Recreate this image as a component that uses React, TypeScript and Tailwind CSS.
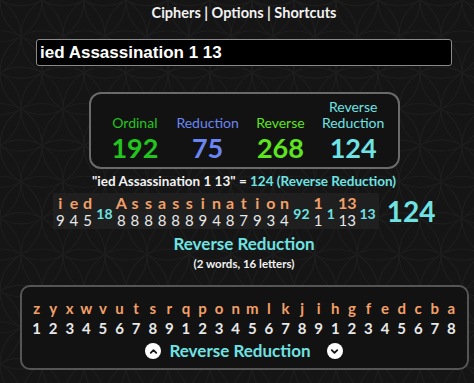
import { ChevronUp, ChevronDown } from 'lucide-react';

const words: { letters: string; values: number[]; sum: number }[] = [
    { letters: 'ied', values: [9, 4, 5], sum: 18 },
    { letters: 'Assassination', values: [8, 8, 8, 8, 8, 8, 9, 4, 8, 7, 9, 3, 4], sum: 92 },
];

const alphabet = 'zyxwvutsrqponmlkjihgfedcba'.split('');
const alphaValues = [1, 2, 3, 4, 5, 6, 7, 8, 9, 1, 2, 3, 4, 5, 6, 7, 8, 9, 1, 2, 3, 4, 5, 6, 7, 8];

const scores = [
    { label: 'Ordinal', value: 192, color: 'text-[#22c51e]' },
    { label: 'Reduction', value: 75, color: 'text-[#6b86f2]' },
    { label: 'Reverse', value: 268, color: 'text-[#5ee51f]' },
    { label: 'Reverse Reduction', value: 124, color: 'text-[#6fe3e3]' },
];

// faint flower-of-life lattice behind the page
function Pattern() {
    const r = 42;
    const h = (r * Math.sqrt(3)) / 2;
    const circles: { x: number; y: number }[] = [];
    for (let j = -1; j < 12; j++) {
        for (let i = -1; i < 14; i++) {
            circles.push({ x: i * r + (j % 2 ? r / 2 : 0), y: j * h });
        }
    }
    return (
        <svg className="absolute inset-0" width="474" height="383">
            {circles.map((c, k) => (
                <circle key={k} cx={c.x} cy={c.y} r={r} fill="none" stroke="#1e1e1e" strokeWidth="1.2" />
            ))}
        </svg>
    );
}

function Cell({ top, bottom, w }: { top: string; bottom: string | number; w?: string }) {
    return (
        <div className={`${w ?? ''} flex flex-col items-center`}>
            <span className="text-[16px] font-bold leading-[19px] text-[#f2a068]">{top}</span>
            <span className="text-[15px] leading-[17px] text-[#e8e8e8]">{bottom}</span>
        </div>
    );
}

function Sum({ n }: { n: number }) {
    return <span className="px-[2px] pt-[5px] text-[14px] font-bold leading-[17px] text-[#6fe3e3]">{n}</span>;
}

export default function App() {
    return (
        <div className="relative w-[474px] h-[383px] overflow-hidden bg-[#151515] text-white font-['Lato',sans-serif]">
            <Pattern />
            <div className="relative pl-[14px] flex flex-col items-center">
                {/* Nav */}
                <div className="pt-[4px] h-[24px] text-[14.5px] font-bold leading-[18px] text-[#f2f2f2]">
                    Ciphers | Options | Shortcuts
                </div>

                {/* Phrase input */}
                <input
                    type="text"
                    readOnly
                    value="ied Assassination 1 13"
                    className="mt-[15px] w-[416px] h-[27px] bg-black border border-[#8a8a8a] rounded-[3px] px-[3px] text-[17px] font-bold text-white font-['Liberation_Sans',Arial,sans-serif] outline-none"
                />

                {/* Score box */}
                <div className="mt-[26px] w-[311px] h-[77px] border-2 border-[#6a6a6a] rounded-[12px] bg-[#121212] px-[8px] grid grid-cols-4 items-end pb-[3px]">
                    {scores.map(s => (
                        <div key={s.label} className={`flex flex-col items-center ${s.color}`}>
                            <div className="text-[14px] leading-[16px] text-center">{s.label}</div>
                            <div className="text-[27px] font-bold leading-[33px]">{s.value}</div>
                        </div>
                    ))}
                </div>

                {/* Equation line */}
                <div className="mt-[4px] text-[13.5px] font-bold leading-[16px] text-[#f2f2f2]">
                    "ied Assassination 1 13" = <span className="text-[#6fe3e3]">124 (Reverse Reduction)</span>
                </div>

                {/* Breakdown */}
                <div className="mt-[4px] flex items-center">
                    <div className="flex items-center bg-[#1f1f1f] h-[36px] pl-[1px] pr-[1px]">
                        {words.map(w => (
                            <div key={w.letters} className="flex items-center">
                                <div className="flex">
                                    {w.letters.split('').map((ch, i) => (
                                        <Cell key={i} top={ch} bottom={w.values[i]} w="w-[13.6px]" />
                                    ))}
                                </div>
                                <Sum n={w.sum} />
                            </div>
                        ))}
                        <Cell top="1" bottom={1} w="px-[2px]" />
                        <Sum n={1} />
                        <Cell top="13" bottom={13} w="px-[1px]" />
                        <Sum n={13} />
                    </div>
                    <span className="ml-[8px] text-[28px] font-bold leading-[34px] text-[#6fe3e3]">124</span>
                </div>

                <div className="mt-[4px] text-[17px] font-bold leading-[22px] text-[#6fe3e3]">Reverse Reduction</div>
                <div className="text-[11.5px] font-bold leading-[18px] text-[#f2f2f2]">(2 words, 16 letters)</div>

                {/* Cipher chart */}
                <div className="mt-[12px] w-[449px] h-[85px] border-2 border-[#555] rounded-[10px] bg-[#121212] flex flex-col items-center pt-[12px]">
                    <div className="flex">
                        {alphabet.map((ch, i) => (
                            <div key={ch} className="w-[16.6px] flex flex-col items-center">
                                <span className="text-[15px] font-bold leading-[19px] text-[#f2a068]">{ch}</span>
                                <span className="text-[15px] font-bold leading-[21px] text-[#e8e8e8]">{alphaValues[i]}</span>
                            </div>
                        ))}
                    </div>
                    <div className="mt-[1px] flex items-center">
                        <div className="size-[16px] rounded-full bg-white flex items-center justify-center">
                            <ChevronUp className="size-[11px] text-[#161616]" strokeWidth={4} />
                        </div>
                        <span className="ml-[8px] text-[17px] font-bold leading-[22px] text-[#6fe3e3]">Reverse Reduction</span>
                        <div className="ml-[16px] size-[16px] rounded-full bg-white flex items-center justify-center">
                            <ChevronDown className="size-[11px] text-[#161616]" strokeWidth={4} />
                        </div>
                    </div>
                </div>
            </div>
        </div>
    );
}
